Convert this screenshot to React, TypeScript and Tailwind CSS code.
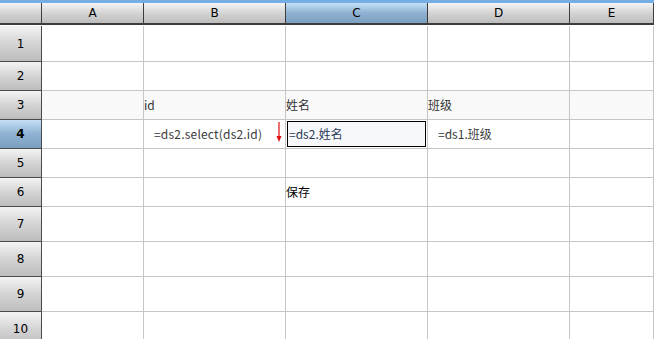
import React from 'react';

const cols = ['A', 'B', 'C', 'D', 'E'];
const rowHeights = [36, 29, 29, 29, 29, 29, 35, 35, 35, 35];

const hdr = 'bg-gradient-to-b from-[#f4f4f4] via-[#d4d4d4] to-[#bdbdbd]';
const hdrSel = 'bg-gradient-to-b from-[#c4e0f6] via-[#8fb2d2] to-[#7b9fc0]';

function Arrow() {
  return (
    <svg width="8" height="22" viewBox="0 0 8 22" className="absolute left-[131px] top-[2px]">
      <line x1="4" y1="0" x2="4" y2="17" stroke="#e01010" strokeWidth="1.2" />
      <path d="M1.5 14 L4 20 L6.5 14 Z" fill="#e01010" />
    </svg>
  );
}

function Cell({ row, col }: { row: number; col: number }) {
  const base = 'relative border-r border-b border-[#c6c6c6] text-[12px] text-[#333] flex items-center overflow-visible whitespace-nowrap';
  const bg = row === 3 ? 'bg-[#f9f9f9]' : 'bg-white';
  let content: React.ReactNode = null;
  if (row === 3 && col === 1) content = <span>id</span>;
  if (row === 3 && col === 2) content = <span>姓名</span>;
  if (row === 3 && col === 3) content = <span>班级</span>;
  if (row === 4 && col === 1) content = <span className="pl-[10px] text-[#3a3a3a] tracking-[0.2px]">=ds2.select(ds2.id)</span>;
  if (row === 4 && col === 3) content = <span className="pl-[10px] text-[#3a3a3a]">=ds1.班级</span>;
  if (row === 6 && col === 2) content = <span className="text-black">保存</span>;
  if (row === 4 && col === 2) {
    return (
      <div className={`${base} ${bg} p-px`}>
        <div className="h-full w-full border border-black bg-[#f7f8fc] flex items-center pl-px text-[#2a3a55]">
          =ds2.姓名
        </div>
      </div>
    );
  }
  return (
    <div className={`${base} ${bg}`}>
      {content}
      {row === 4 && col === 1 && <Arrow />}
    </div>
  );
}

export default function App() {
  return (
    <div
      className="w-[654px] h-[339px] overflow-hidden bg-white"
      style={{ fontFamily: '"Noto Sans CJK SC", "Noto Sans", sans-serif' }}
    >
      <div className="h-[3px] bg-[#74aee4]" />
      <div
        className="grid grid-cols-[42px_102px_142px_142px_142px_1fr] h-[22px]"
        style={{ fontFamily: '"DejaVu Sans", "Liberation Sans", sans-serif' }}
      >
        <div className={`${hdr} border-r border-b-2 border-[#3c3c3c]`} />
        {cols.map((c) => (
          <div
            key={c}
            className={`${c === 'C' ? hdrSel : hdr} border-r border-b-2 border-[#3c3c3c] flex items-center justify-center text-[12px] text-black`}
          >
            {c}
          </div>
        ))}
      </div>
      <div className="h-px" />
      {rowHeights.map((h, i) => {
        const row = i + 1;
        return (
          <div
            key={row}
            className={`grid grid-cols-[42px_102px_142px_142px_142px_1fr] ${
              h === 36 ? 'h-[36px]' : h === 35 ? 'h-[35px]' : 'h-[29px]'
            }`}
          >
            <div
              className={`${row === 4 ? hdrSel + ' font-bold' : hdr} border-r border-b border-[#4a4a4a] flex items-center justify-center text-[12px] text-black`}
              style={{ fontFamily: '"DejaVu Sans", "Liberation Sans", sans-serif' }}
            >
              {row}
            </div>
            {cols.map((_, ci) => (
              <Cell key={ci} row={row} col={ci} />
            ))}
          </div>
        );
      })}
    </div>
  );
}
